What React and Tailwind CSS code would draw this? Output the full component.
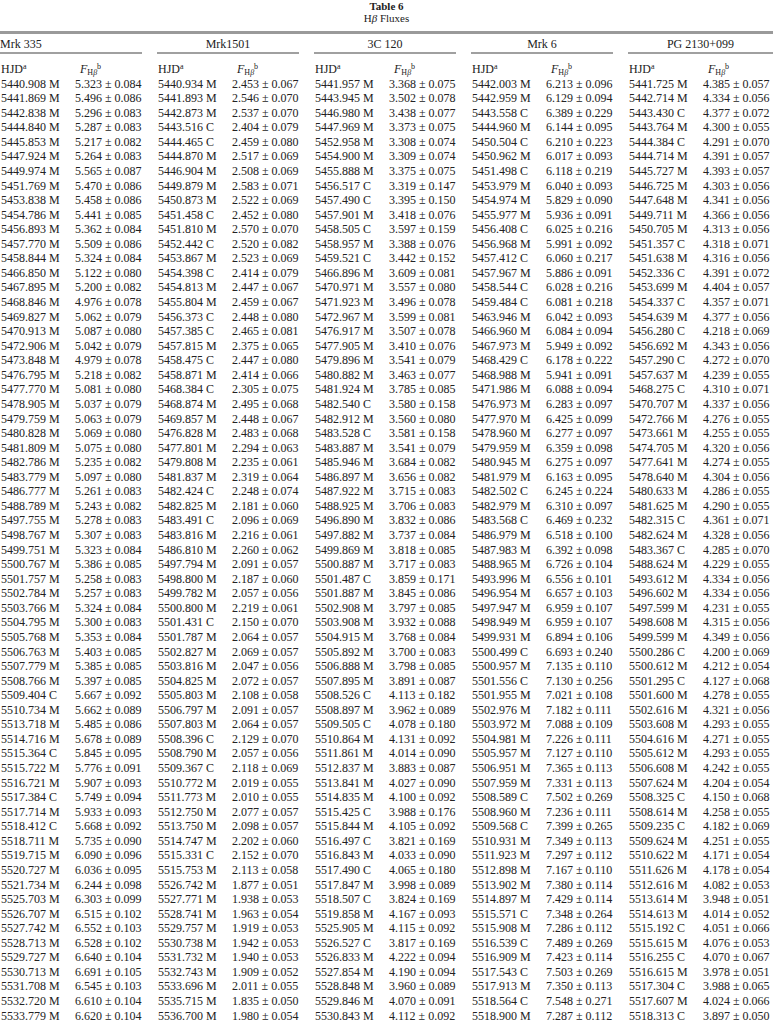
const groups = ['Mrk 335', 'Mrk1501', '3C 120', 'Mrk 6', 'PG 2130+099'];

// each row: 5 groups of "HJD+flag flux err"
const rows = `5440.908M 5.323 0.084 5440.934M 2.453 0.067 5441.957M 3.368 0.075 5442.003M 6.213 0.096 5441.725M 4.385 0.057
5441.869M 5.496 0.086 5441.893M 2.546 0.070 5443.945M 3.502 0.078 5442.959M 6.129 0.094 5442.714M 4.334 0.056
5442.838M 5.296 0.083 5442.873M 2.537 0.070 5446.980M 3.438 0.077 5443.558C 6.389 0.229 5443.430C 4.377 0.072
5444.840M 5.287 0.083 5443.516C 2.404 0.079 5447.969M 3.373 0.075 5444.960M 6.144 0.095 5443.764M 4.300 0.055
5445.853M 5.217 0.082 5444.465C 2.459 0.080 5452.958M 3.308 0.074 5450.504C 6.210 0.223 5444.384C 4.291 0.070
5447.924M 5.264 0.083 5444.870M 2.517 0.069 5454.900M 3.309 0.074 5450.962M 6.017 0.093 5444.714M 4.391 0.057
5449.974M 5.565 0.087 5446.904M 2.508 0.069 5455.888M 3.375 0.075 5451.498C 6.118 0.219 5445.727M 4.393 0.057
5451.769M 5.470 0.086 5449.879M 2.583 0.071 5456.517C 3.319 0.147 5453.979M 6.040 0.093 5446.725M 4.303 0.056
5453.838M 5.458 0.086 5450.873M 2.522 0.069 5457.490C 3.395 0.150 5454.974M 5.829 0.090 5447.648M 4.341 0.056
5454.786M 5.441 0.085 5451.458C 2.452 0.080 5457.901M 3.418 0.076 5455.977M 5.936 0.091 5449.711M 4.366 0.056
5456.893M 5.362 0.084 5451.810M 2.570 0.070 5458.505C 3.597 0.159 5456.408C 6.025 0.216 5450.705M 4.313 0.056
5457.770M 5.509 0.086 5452.442C 2.520 0.082 5458.957M 3.388 0.076 5456.968M 5.991 0.092 5451.357C 4.318 0.071
5458.844M 5.324 0.084 5453.867M 2.523 0.069 5459.521C 3.442 0.152 5457.412C 6.060 0.217 5451.638M 4.316 0.056
5466.850M 5.122 0.080 5454.398C 2.414 0.079 5466.896M 3.609 0.081 5457.967M 5.886 0.091 5452.336C 4.391 0.072
5467.895M 5.200 0.082 5454.813M 2.447 0.067 5470.971M 3.557 0.080 5458.544C 6.028 0.216 5453.699M 4.404 0.057
5468.846M 4.976 0.078 5455.804M 2.459 0.067 5471.923M 3.496 0.078 5459.484C 6.081 0.218 5454.337C 4.357 0.071
5469.827M 5.062 0.079 5456.373C 2.448 0.080 5472.967M 3.599 0.081 5463.946M 6.042 0.093 5454.639M 4.377 0.056
5470.913M 5.087 0.080 5457.385C 2.465 0.081 5476.917M 3.507 0.078 5466.960M 6.084 0.094 5456.280C 4.218 0.069
5472.906M 5.042 0.079 5457.815M 2.375 0.065 5477.905M 3.410 0.076 5467.973M 5.949 0.092 5456.692M 4.343 0.056
5473.848M 4.979 0.078 5458.475C 2.447 0.080 5479.896M 3.541 0.079 5468.429C 6.178 0.222 5457.290C 4.272 0.070
5476.795M 5.218 0.082 5458.871M 2.414 0.066 5480.882M 3.463 0.077 5468.988M 5.941 0.091 5457.637M 4.239 0.055
5477.770M 5.081 0.080 5468.384C 2.305 0.075 5481.924M 3.785 0.085 5471.986M 6.088 0.094 5468.275C 4.310 0.071
5478.905M 5.037 0.079 5468.874M 2.495 0.068 5482.540C 3.580 0.158 5476.973M 6.283 0.097 5470.707M 4.337 0.056
5479.759M 5.063 0.079 5469.857M 2.448 0.067 5482.912M 3.560 0.080 5477.970M 6.425 0.099 5472.766M 4.276 0.055
5480.828M 5.069 0.080 5476.828M 2.483 0.068 5483.528C 3.581 0.158 5478.960M 6.277 0.097 5473.661M 4.255 0.055
5481.809M 5.075 0.080 5477.801M 2.294 0.063 5483.887M 3.541 0.079 5479.959M 6.359 0.098 5474.705M 4.320 0.056
5482.786M 5.235 0.082 5479.808M 2.235 0.061 5485.946M 3.684 0.082 5480.945M 6.275 0.097 5477.641M 4.274 0.055
5483.779M 5.097 0.080 5481.837M 2.319 0.064 5486.897M 3.656 0.082 5481.979M 6.163 0.095 5478.640M 4.304 0.056
5486.777M 5.261 0.083 5482.424C 2.248 0.074 5487.922M 3.715 0.083 5482.502C 6.245 0.224 5480.633M 4.286 0.055
5488.789M 5.243 0.082 5482.825M 2.181 0.060 5488.925M 3.706 0.083 5482.979M 6.310 0.097 5481.625M 4.290 0.055
5497.755M 5.278 0.083 5483.491C 2.096 0.069 5496.890M 3.832 0.086 5483.568C 6.469 0.232 5482.315C 4.361 0.071
5498.767M 5.307 0.083 5483.816M 2.216 0.061 5497.882M 3.737 0.084 5486.979M 6.518 0.100 5482.624M 4.328 0.056
5499.751M 5.323 0.084 5486.810M 2.260 0.062 5499.869M 3.818 0.085 5487.983M 6.392 0.098 5483.367C 4.285 0.070
5500.767M 5.386 0.085 5497.794M 2.091 0.057 5500.887M 3.717 0.083 5488.965M 6.726 0.104 5488.624M 4.229 0.055
5501.757M 5.258 0.083 5498.800M 2.187 0.060 5501.487C 3.859 0.171 5493.996M 6.556 0.101 5493.612M 4.334 0.056
5502.784M 5.257 0.083 5499.782M 2.057 0.056 5501.887M 3.845 0.086 5496.954M 6.657 0.103 5496.602M 4.334 0.056
5503.766M 5.324 0.084 5500.800M 2.219 0.061 5502.908M 3.797 0.085 5497.947M 6.959 0.107 5497.599M 4.231 0.055
5504.795M 5.300 0.083 5501.431C 2.150 0.070 5503.908M 3.932 0.088 5498.949M 6.959 0.107 5498.608M 4.315 0.056
5505.768M 5.353 0.084 5501.787M 2.064 0.057 5504.915M 3.768 0.084 5499.931M 6.894 0.106 5499.599M 4.349 0.056
5506.763M 5.403 0.085 5502.827M 2.069 0.057 5505.892M 3.700 0.083 5500.499C 6.693 0.240 5500.286C 4.200 0.069
5507.779M 5.385 0.085 5503.816M 2.047 0.056 5506.888M 3.798 0.085 5500.957M 7.135 0.110 5500.612M 4.212 0.054
5508.766M 5.397 0.085 5504.825M 2.072 0.057 5507.895M 3.891 0.087 5501.556C 7.130 0.256 5501.295C 4.127 0.068
5509.404C 5.667 0.092 5505.803M 2.108 0.058 5508.526C 4.113 0.182 5501.955M 7.021 0.108 5501.600M 4.278 0.055
5510.734M 5.662 0.089 5506.797M 2.091 0.057 5508.897M 3.962 0.089 5502.976M 7.182 0.111 5502.616M 4.321 0.056
5513.718M 5.485 0.086 5507.803M 2.064 0.057 5509.505C 4.078 0.180 5503.972M 7.088 0.109 5503.608M 4.293 0.055
5514.716M 5.678 0.089 5508.396C 2.129 0.070 5510.864M 4.131 0.092 5504.981M 7.226 0.111 5504.616M 4.271 0.055
5515.364C 5.845 0.095 5508.790M 2.057 0.056 5511.861M 4.014 0.090 5505.957M 7.127 0.110 5505.612M 4.293 0.055
5515.722M 5.776 0.091 5509.367C 2.118 0.069 5512.837M 3.883 0.087 5506.951M 7.365 0.113 5506.608M 4.242 0.055
5516.721M 5.907 0.093 5510.772M 2.019 0.055 5513.841M 4.027 0.090 5507.959M 7.331 0.113 5507.624M 4.204 0.054
5517.384C 5.749 0.094 5511.773M 2.010 0.055 5514.835M 4.100 0.092 5508.589C 7.502 0.269 5508.325C 4.150 0.068
5517.714M 5.933 0.093 5512.750M 2.077 0.057 5515.425C 3.988 0.176 5508.960M 7.236 0.111 5508.614M 4.258 0.055
5518.412C 5.668 0.092 5513.750M 2.098 0.057 5515.844M 4.105 0.092 5509.568C 7.399 0.265 5509.235C 4.182 0.069
5518.711M 5.735 0.090 5514.747M 2.202 0.060 5516.497C 3.821 0.169 5510.931M 7.349 0.113 5509.624M 4.251 0.055
5519.715M 6.090 0.096 5515.331C 2.152 0.070 5516.843M 4.033 0.090 5511.923M 7.297 0.112 5510.622M 4.171 0.054
5520.727M 6.036 0.095 5515.753M 2.113 0.058 5517.490C 4.065 0.180 5512.898M 7.167 0.110 5511.626M 4.178 0.054
5521.734M 6.244 0.098 5526.742M 1.877 0.051 5517.847M 3.998 0.089 5513.902M 7.380 0.114 5512.616M 4.082 0.053
5525.703M 6.303 0.099 5527.771M 1.938 0.053 5518.507C 3.824 0.169 5514.897M 7.429 0.114 5513.614M 3.948 0.051
5526.707M 6.515 0.102 5528.741M 1.963 0.054 5519.858M 4.167 0.093 5515.571C 7.348 0.264 5514.613M 4.014 0.052
5527.742M 6.552 0.103 5529.757M 1.919 0.053 5525.905M 4.115 0.092 5515.908M 7.286 0.112 5515.192C 4.051 0.066
5528.713M 6.528 0.102 5530.738M 1.942 0.053 5526.527C 3.817 0.169 5516.539C 7.489 0.269 5515.615M 4.076 0.053
5529.727M 6.640 0.104 5531.732M 1.940 0.053 5526.833M 4.222 0.094 5516.909M 7.423 0.114 5516.255C 4.070 0.067
5530.713M 6.691 0.105 5532.743M 1.909 0.052 5527.854M 4.190 0.094 5517.543C 7.503 0.269 5516.615M 3.978 0.051
5531.708M 6.545 0.103 5533.696M 2.011 0.055 5528.848M 3.960 0.089 5517.913M 7.350 0.113 5517.304C 3.988 0.065
5532.720M 6.610 0.104 5535.715M 1.835 0.050 5529.846M 4.070 0.091 5518.564C 7.548 0.271 5517.607M 4.024 0.066
5533.779M 6.620 0.104 5536.700M 1.980 0.054 5530.843M 4.112 0.092 5518.900M 7.287 0.112 5518.313C 3.897 0.050`
  .split('\n')
  .map((line) => {
    const t = line.trim().split(' ');
    const cells = [];
    for (let i = 0; i < 5; i++) {
      const hjd = t[i * 3];
      cells.push({ hjd: `${hjd.slice(0, -1)} ${hjd.slice(-1)}`, flux: t[i * 3 + 1], err: t[i * 3 + 2] });
    }
    return cells;
  });

const cols = 'grid grid-cols-[74px_83px_74px_83px_74px_83px_74px_83px_74px_1fr] pl-[1px]';

function FluxHead() {
  return (
    <span className="pl-[5px]">
      <i>F</i>
      <sub className="text-[8px]">
        H<i>β</i>
      </sub>
      <sup className="text-[8px]">b</sup>
    </span>
  );
}

export default function App() {
  return (
    <div className="w-[773px] h-[1024px] overflow-hidden bg-white text-[#222] font-['Liberation_Serif',serif]">
      <div className="text-center text-[11px] leading-[12px]">
        <div className="font-bold">Table 6</div>
        <div>
          H<i>β</i> Fluxes
        </div>
      </div>

      <div className="mt-[7px] h-[3px] bg-[#9a9a9a]" />

      <div className="grid grid-cols-[157px_157px_157px_157px_1fr] mt-[3px] text-[12px] leading-[14px]">
        {groups.map((g, i) => (
          <div key={g} className={i < 4 ? 'mr-[15px]' : ''}>
            <div className={i === 0 ? 'text-left' : 'text-center'}>{g}</div>
            <div className="h-[2px] bg-[#a0a0a0] mt-[1px]" />
          </div>
        ))}
      </div>

      <div className={`${cols} mt-[8px] text-[12px] leading-[14.6px] whitespace-nowrap`}>
        {groups.map((g) => [
          <div key={g + 'h'}>
            HJD<sup className="text-[8px]">a</sup>
          </div>,
          <div key={g + 'f'}>
            <FluxHead />
          </div>,
        ])}
      </div>

      <div className={`${cols} text-[12px] leading-[14.57px] whitespace-nowrap`}>
        {rows.map((cells, r) =>
          cells.map((c, i) => [
            <div key={`${r}-${i}-h`}>{c.hjd}</div>,
            <div key={`${r}-${i}-f`}>
              {c.flux} ± {c.err}
            </div>,
          ])
        )}
      </div>
    </div>
  );
}
